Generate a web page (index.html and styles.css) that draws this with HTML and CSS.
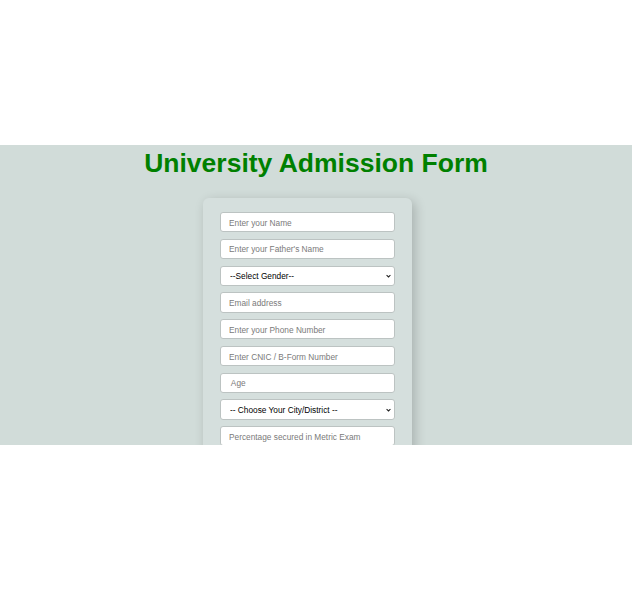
FILE: index.html
```html
<!DOCTYPE html>
<html lang="en">
<head>
<meta charset="utf-8">
<title>University Admission Form</title>
<link rel="stylesheet" href="styles.css">
</head>
<body>
<section class="band">
  <h1 class="title">University Admission Form</h1>
  <form class="card">
    <input class="field" type="text" placeholder="Enter your Name">
    <input class="field" type="text" placeholder="Enter your Father's Name">
    <select class="field select">
      <option>--Select Gender--</option>
      <option>Male</option>
      <option>Female</option>
    </select>
    <input class="field" type="email" placeholder="Email address">
    <input class="field" type="text" placeholder="Enter your Phone Number">
    <input class="field" type="text" placeholder="Enter CNIC / B-Form Number">
    <input class="field" type="text" placeholder=" Age">
    <select class="field select">
      <option>-- Choose Your City/District --</option>
    </select>
    <input class="field" type="text" placeholder="Percentage secured in Metric Exam">
  </form>
</section>
</body>
</html>
```

FILE: styles.css
```css
html, body {
  margin: 0;
  padding: 0;
  background: #ffffff;
}

body {
  font-family: "Liberation Sans", Arial, sans-serif;
}

.band {
  margin-top: 145px;
  width: 632px;
  height: 300px;
  overflow: hidden;
  background: #d1dcd9;
  display: flex;
  flex-direction: column;
  align-items: center;
}

.title {
  margin: 0;
  padding-top: 3px;
  font-size: 26.5px;
  font-weight: bold;
  line-height: 31px;
  color: #008000;
  text-align: center;
}

.card {
  align-self: flex-start;
  margin-top: 19px;
  margin-left: 203px;
  width: 175px;
  padding: 14px 17px 15px;
  background: #d5dfdd;
  border-radius: 6px;
  box-shadow: 3px 3px 12px rgba(0, 0, 0, 0.2);
  display: flex;
  flex-direction: column;
  gap: 6.6px;
}

.field {
  box-sizing: border-box;
  width: 100%;
  height: 20.2px;
  margin: 0;
  padding: 1px 8px 0;
  border: 1px solid #bcc3c2;
  border-radius: 3px;
  background: #ffffff;
  font-family: "Liberation Sans", Arial, sans-serif;
  font-size: 8.3px;
  color: #111111;
  outline: none;
}

.field::placeholder {
  color: #7a7a7a;
}

.select {
  appearance: none;
  -webkit-appearance: none;
  padding: 1px 12px 0 9px;
  color: #000000;
  background-color: #ffffff;
  background-image: url("data:image/svg+xml;utf8,<svg xmlns='http://www.w3.org/2000/svg' width='6' height='4' viewBox='0 0 6 4'><path d='M0.7 0.9 L3 3.1 L5.3 0.9' fill='none' stroke='%23222' stroke-width='1.3'/></svg>");
  background-repeat: no-repeat;
  background-position: right 3px center;
  background-size: 5px 4px;
}
```
